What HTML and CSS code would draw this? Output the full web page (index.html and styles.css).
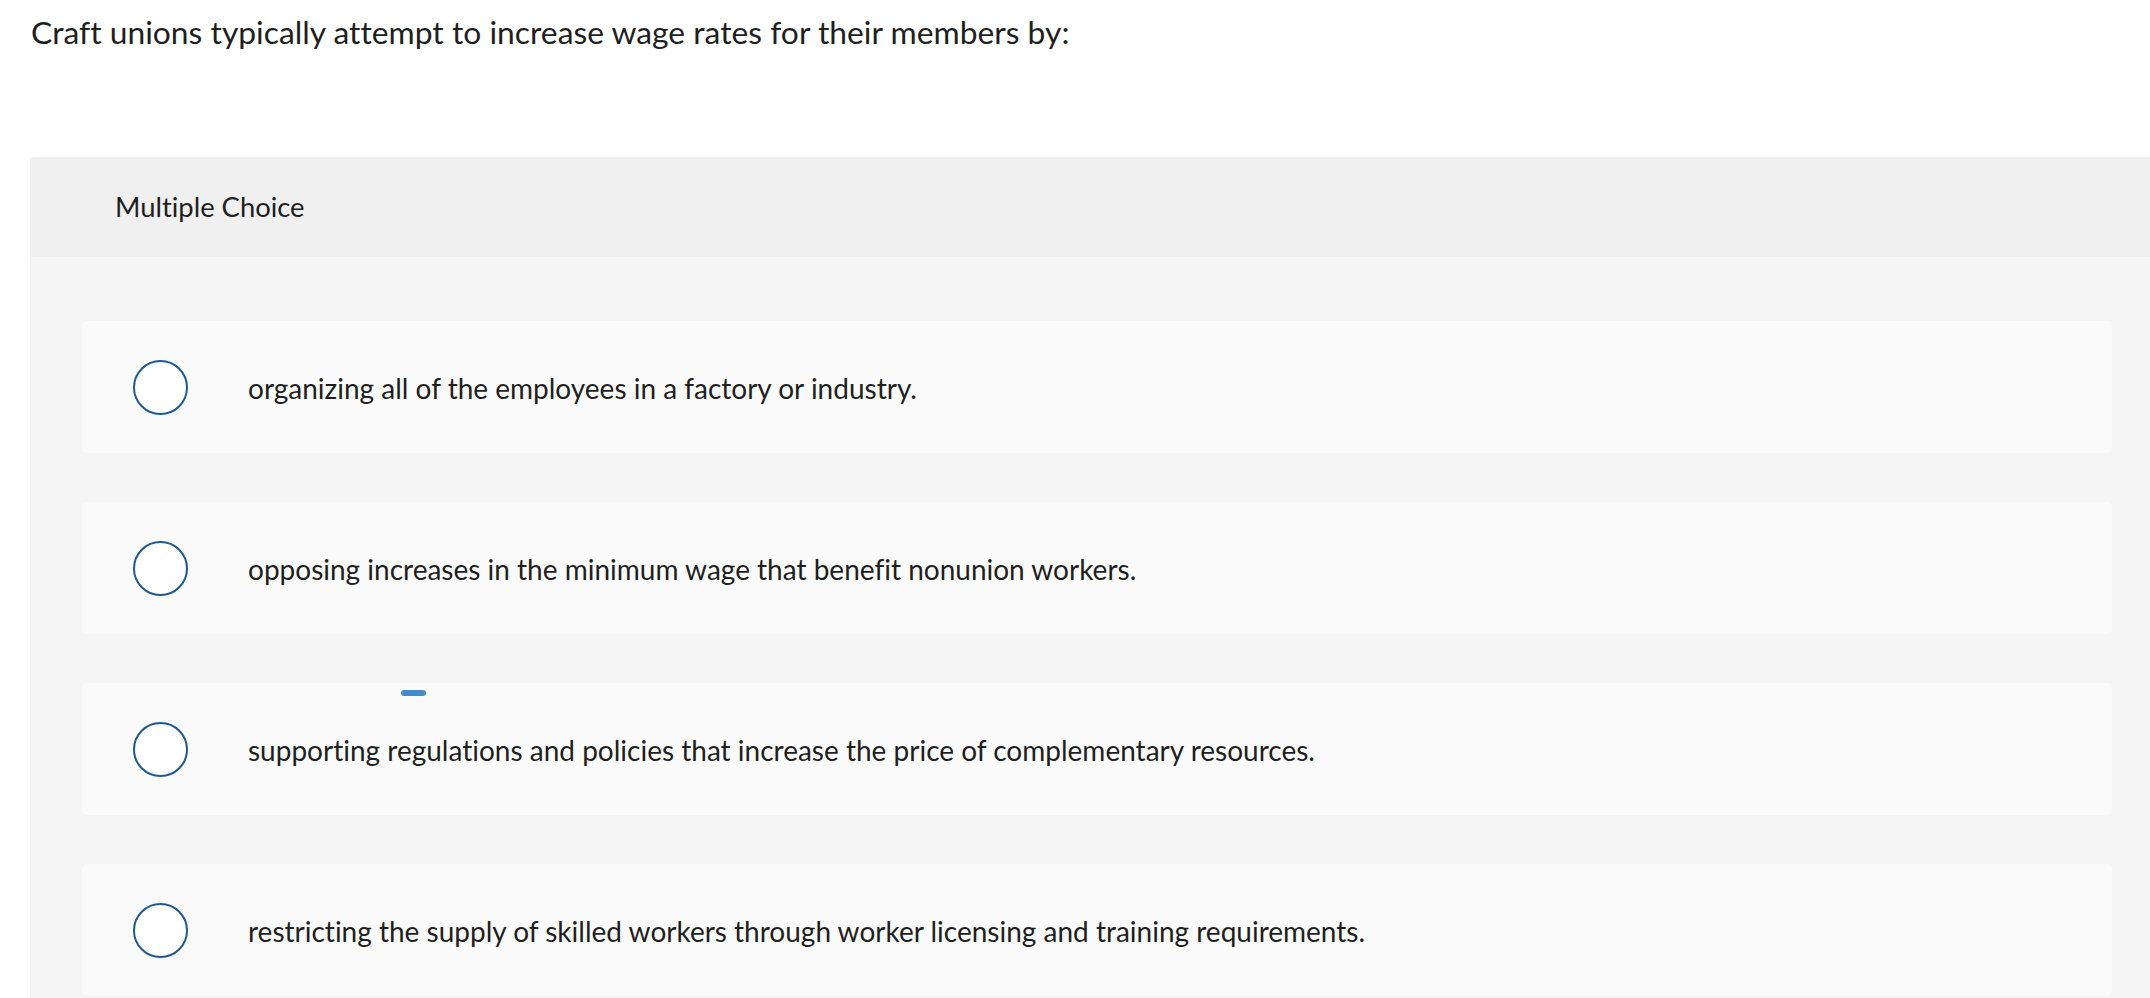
FILE: index.html
```html
<!DOCTYPE html>
<html lang="en">
<head>
<meta charset="utf-8">
<title>Multiple Choice</title>
<link rel="stylesheet" href="styles.css">
</head>
<body>
<div class="page">
  <p class="question">Craft unions typically attempt to increase wage rates for their members by:</p>
  <section class="panel">
    <div class="panel-header">Multiple Choice</div>
    <div class="panel-body">
      <div class="choice">
        <span class="radio"></span>
        <span class="choice-text">organizing all of the employees in a factory or industry.</span>
      </div>
      <div class="choice">
        <span class="radio"></span>
        <span class="choice-text">opposing increases in the minimum wage that benefit nonunion workers.</span>
      </div>
      <div class="choice choice-marked">
        <span class="dash"></span>
        <span class="radio"></span>
        <span class="choice-text">supporting regulations and policies that increase the price of complementary resources.</span>
      </div>
      <div class="choice">
        <span class="radio"></span>
        <span class="choice-text">restricting the supply of skilled workers through worker licensing and training requirements.</span>
      </div>
    </div>
  </section>
</div>
</body>
</html>
```

FILE: styles.css
```css
html, body {
  margin: 0;
  padding: 0;
  background: #ffffff;
  overflow: hidden;
}

.page {
  width: 2150px;
  height: 998px;
  overflow: hidden;
  font-family: Lato, "Liberation Sans", sans-serif;
  font-variant-ligatures: none;
  font-feature-settings: "liga" 0, "clig" 0;
  color: #1f1f1f;
}

.question {
  margin: 0;
  padding: 13px 0 0 31px;
  height: 157px;
  box-sizing: border-box;
  font-size: 31.8px;
  line-height: 38px;
}

.panel {
  margin-left: 30px;
  width: 2134px;
  background: #f5f5f5;
  border-radius: 5px 5px 0 0;
}

.panel-header {
  height: 100px;
  box-sizing: border-box;
  display: flex;
  align-items: center;
  padding-left: 85px;
  padding-bottom: 2px;
  background: #f0f0f0;
  border-radius: 5px 5px 0 0;
  font-size: 27.4px;
}

.panel-body {
  display: flex;
  flex-direction: column;
  gap: 49px;
  padding: 64px 52px 40px 52px;
}

.choice {
  position: relative;
  height: 132px;
  box-sizing: border-box;
  display: flex;
  align-items: center;
  gap: 60px;
  padding-left: 51px;
  background: #fafafa;
  border-radius: 5px;
}

.radio {
  flex: none;
  width: 55px;
  height: 55px;
  box-sizing: border-box;
  border: 2px solid #1f5a8f;
  border-radius: 50%;
  background: #ffffff;
}

.choice-text {
  font-size: 28px;
  line-height: 34px;
  padding-top: 2px;
}

.dash {
  position: absolute;
  left: 319px;
  top: 7px;
  width: 25px;
  height: 6px;
  border-radius: 3px;
  background: #438bca;
}
```
